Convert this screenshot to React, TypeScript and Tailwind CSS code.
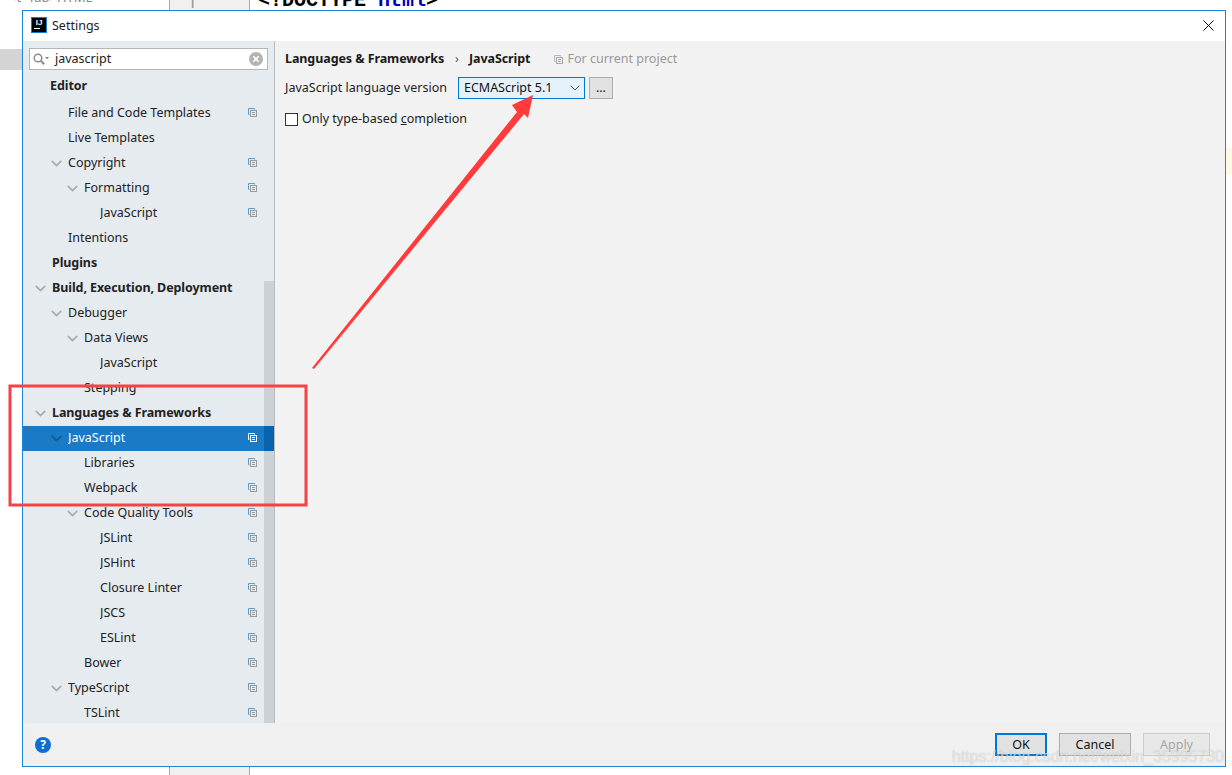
import { X, ChevronDown } from 'lucide-react'

type Row = {
  label: string
  indent: number
  arrow?: boolean
  bold?: boolean
  copy?: boolean
  selected?: boolean
}

const rows: Row[] = [
  { label: 'Editor', indent: 27, bold: true },
  { label: 'File and Code Templates', indent: 45, copy: true },
  { label: 'Live Templates', indent: 45 },
  { label: 'Copyright', indent: 45, arrow: true, copy: true },
  { label: 'Formatting', indent: 61, arrow: true, copy: true },
  { label: 'JavaScript', indent: 77, copy: true },
  { label: 'Intentions', indent: 45 },
  { label: 'Plugins', indent: 29, bold: true },
  { label: 'Build, Execution, Deployment', indent: 29, arrow: true, bold: true },
  { label: 'Debugger', indent: 45, arrow: true },
  { label: 'Data Views', indent: 61, arrow: true },
  { label: 'JavaScript', indent: 77 },
  { label: 'Stepping', indent: 61 },
  { label: 'Languages & Frameworks', indent: 29, arrow: true, bold: true },
  { label: 'JavaScript', indent: 45, arrow: true, copy: true, selected: true },
  { label: 'Libraries', indent: 61, copy: true },
  { label: 'Webpack', indent: 61, copy: true },
  { label: 'Code Quality Tools', indent: 61, arrow: true, copy: true },
  { label: 'JSLint', indent: 77, copy: true },
  { label: 'JSHint', indent: 77, copy: true },
  { label: 'Closure Linter', indent: 77, copy: true },
  { label: 'JSCS', indent: 77, copy: true },
  { label: 'ESLint', indent: 77, copy: true },
  { label: 'Bower', indent: 61, copy: true },
  { label: 'TypeScript', indent: 45, arrow: true, copy: true },
  { label: 'TSLint', indent: 61, copy: true },
]

function CopyIcon({ light }: { light?: boolean }) {
  const a = light ? '#ffffff' : '#5f9ccb'
  const b = light ? '#ffffff' : '#9a9a9a'
  return (
    <svg width="9" height="9" viewBox="0 0 9 9" fill="none" className="mt-[-2px] shrink-0">
      <path d="M6.5 1.5V.5H.5v6h1" stroke={a} />
      <rect x="2.5" y="2.5" width="6" height="6" stroke={b} />
      <path d="M4 4.5h3M4 6.5h3" stroke={b} />
    </svg>
  )
}

function TreeRow({ row }: { row: Row }) {
  return (
    <div
      className={`relative flex h-[25px] shrink-0 items-center pr-[17px] ${
        row.selected ? 'bg-[#1a7ac5] text-white' : 'text-[#222222]'
      }`}
      style={{ paddingLeft: row.indent }}
    >
      {row.arrow && (
        <ChevronDown
          size={17}
          strokeWidth={2.5}
          className={`absolute top-[4px] ${row.selected ? 'text-[#0f5a95]' : 'text-[#a8adb2]'}`}
          style={{ left: row.indent - 20 }}
        />
      )}
      <span
        className={`flex-1 truncate ${row.bold ? 'font-bold tracking-[-0.08px]' : ''} ${
          row.label === 'Editor' ? 'mb-[4px]' : ''
        }`}
      >
        {row.label}
      </span>
      {row.copy && <CopyIcon light={row.selected} />}
      {row.selected && <div className="absolute bottom-0 right-0 top-0 w-[10px] bg-[#0a62ad]" />}
    </div>
  )
}

export default function App() {
  return (
    <div className="relative h-[775px] w-[1232px] overflow-hidden bg-white font-['Noto_Sans','Open_Sans',sans-serif] text-[12.5px] leading-none">
      {/* editor behind the dialog */}
      <div className="absolute left-0 top-[49px] h-[21px] w-[22px] bg-[#d4d4d4]" />
      <div className="absolute left-[169px] top-0 h-[775px] w-[81px] border-x border-x-[#a9a9a9] bg-[#f0f0f0]" />
      <div className="absolute left-[187px] top-[-8px] text-[18px] text-[#999999]">1</div>
      <div className="absolute left-[258px] top-[-9px] font-['Liberation_Mono',monospace] text-[20px] font-bold">
        <span>&lt;!DOCTYPE </span>
        <span className="text-[#0000c0]">html</span>
        <span>&gt;</span>
      </div>
      <div className="absolute left-[9px] top-[-9px] text-[13px] text-[#888888]">&lt;t· Tab&gt;HTML</div>
      <div className="absolute left-[1226px] top-[147px] h-[27px] w-[6px] bg-[#fff8e5]" />

      {/* dialog */}
      <div className="absolute left-[22px] top-[10px] flex h-[757px] w-[1204px] flex-col border border-[#1a86dc] bg-[#f2f2f2]">
        <div className="flex h-[30px] shrink-0 items-center bg-white pl-[8px] pr-[7px]">
          <div className="mt-[-2px] flex h-[16px] w-[16px] flex-col items-center border border-[#1a7ad0] bg-black pt-px font-['Liberation_Sans',sans-serif] text-[8px] font-bold text-white">
            IJ
            <div className="ml-[2px] mt-px h-px w-[6px] self-start bg-white" />
          </div>
          <span className="ml-[5px] mt-px text-[#222222]">Settings</span>
          <X size={19} strokeWidth={1.2} className="ml-auto mt-[-2px] text-black" />
        </div>

        <div className="flex min-h-0 flex-1">
          <div className="flex w-[252px] shrink-0 flex-col border-r border-r-[#b9bcbf] bg-[#e6ebf0]">
            <div className="pl-[6px] pr-[6px] pt-[7px]">
              <div className="flex h-[22px] items-center border border-[#b5b5b5] bg-white pl-[3px] pr-[4px]">
                <svg width="16" height="13" viewBox="0 0 16 13" fill="none" className="shrink-0">
                  <circle cx="5" cy="5" r="3.8" stroke="#8a8a8a" strokeWidth="1.4" />
                  <path d="M8 8l3.2 3.2" stroke="#8a8a8a" strokeWidth="2" />
                  <path d="M12 4h4l-2 2.5z" fill="#8a8a8a" />
                </svg>
                <span className="ml-[6px] mt-px flex-1 text-[#222222]">javascript</span>
                <svg width="14" height="14" viewBox="0 0 14 14">
                  <circle cx="7" cy="7" r="7" fill="#b3b3b3" />
                  <path d="M4.3 4.3l5.4 5.4M9.7 4.3l-5.4 5.4" stroke="#fff" strokeWidth="1.6" />
                </svg>
              </div>
            </div>
            <div className="relative flex min-h-0 flex-1 flex-col overflow-hidden pt-[6px]">
              <div className="absolute bottom-0 right-0 top-[211px] w-[10px] bg-[#ccd1d6]" />
              {rows.map((row, i) => (
                <TreeRow key={i} row={row} />
              ))}
            </div>
          </div>

          <div className="flex-1 pl-[10px] pt-[10px]">
            <div className="flex h-[16px] items-center">
              <span className="font-bold tracking-[-0.08px] text-[#1a1a1a]">Languages &amp; Frameworks</span>
              <span className="ml-[11px] text-[#555555]">›</span>
              <span className="ml-[10px] font-bold tracking-[-0.08px] text-[#1a1a1a]">JavaScript</span>
              <span className="ml-[24px]">
                <svg width="9" height="9" viewBox="0 0 9 9" fill="none">
                  <path d="M6.5 1.5V.5H.5v6h1" stroke="#a8b8c4" />
                  <rect x="2.5" y="2.5" width="6" height="6" stroke="#aaaaaa" />
                  <path d="M4 4.5h3M4 6.5h3" stroke="#aaaaaa" />
                </svg>
              </span>
              <span className="ml-[4px] text-[#999999]">For current project</span>
            </div>
            <div className="mt-[10px] flex items-center">
              <span className="text-[#222222]">JavaScript language version</span>
              <div className="ml-[11px] flex h-[22px] w-[127px] items-center border border-[#0078d7] bg-[#e5f1fb] pl-[5px] pr-px text-[#111111]">
                <span className="flex-1">ECMAScript 5.1</span>
                <ChevronDown size={16} strokeWidth={1.4} className="text-[#444444]" />
              </div>
              <div className="ml-[4px] flex h-[22px] w-[24px] items-center justify-center border border-[#adadad] bg-[#e1e1e1] text-[#111111]">
                ...
              </div>
            </div>
            <div className="mt-[14px] flex items-center text-[#222222]">
              <div className="h-[13px] w-[13px] border border-[#333333] bg-white" />
              <span className="ml-[4px]">
                Only type-based <span className="underline">c</span>ompletion
              </span>
            </div>
          </div>
        </div>

        <div className="flex h-[43px] shrink-0 items-start bg-[#f0f0f0] pl-[12px] pr-[15px]">
          <div className="mt-[14px] flex h-[16px] w-[16px] items-center justify-center rounded-full bg-[#0a6fd0] text-[12px] font-bold text-white">
            ?
          </div>
          <div className="ml-auto mt-[10px] flex h-[23px] w-[52px] items-center justify-center border-2 border-[#0078d7] bg-[#e1e1e1] pt-px text-[#111111]">
            OK
          </div>
          <div className="ml-[12px] mt-[10px] flex h-[23px] w-[72px] items-center justify-center border border-[#adadad] bg-[#e1e1e1] pt-px text-[#111111]">
            Cancel
          </div>
          <div className="ml-[12px] mt-[10px] flex h-[23px] w-[67px] items-center justify-center border border-[#cccccc] bg-[#e8e8e8] pt-px text-[#a5a5a5]">
            Apply
          </div>
        </div>
      </div>

      {/* annotations drawn on top of the screenshot */}
      <svg width="1232" height="775" className="pointer-events-none absolute left-0 top-0">
        <rect x="10" y="386" width="296" height="119" fill="none" stroke="#f24444" strokeWidth="3" />
        <path d="M312 368L517 112l-5-7 21-10-5 23-4-4L314 369z" fill="#ff3b3b" />
      </svg>
      <div className="absolute left-[952px] top-[749px] font-['Liberation_Sans',sans-serif] text-[16px] text-white/60 [text-shadow:0_0_1px_rgba(0,0,0,0.25)]">
        https://blog.csdn.net/weixin_35995730
      </div>
    </div>
  )
}
